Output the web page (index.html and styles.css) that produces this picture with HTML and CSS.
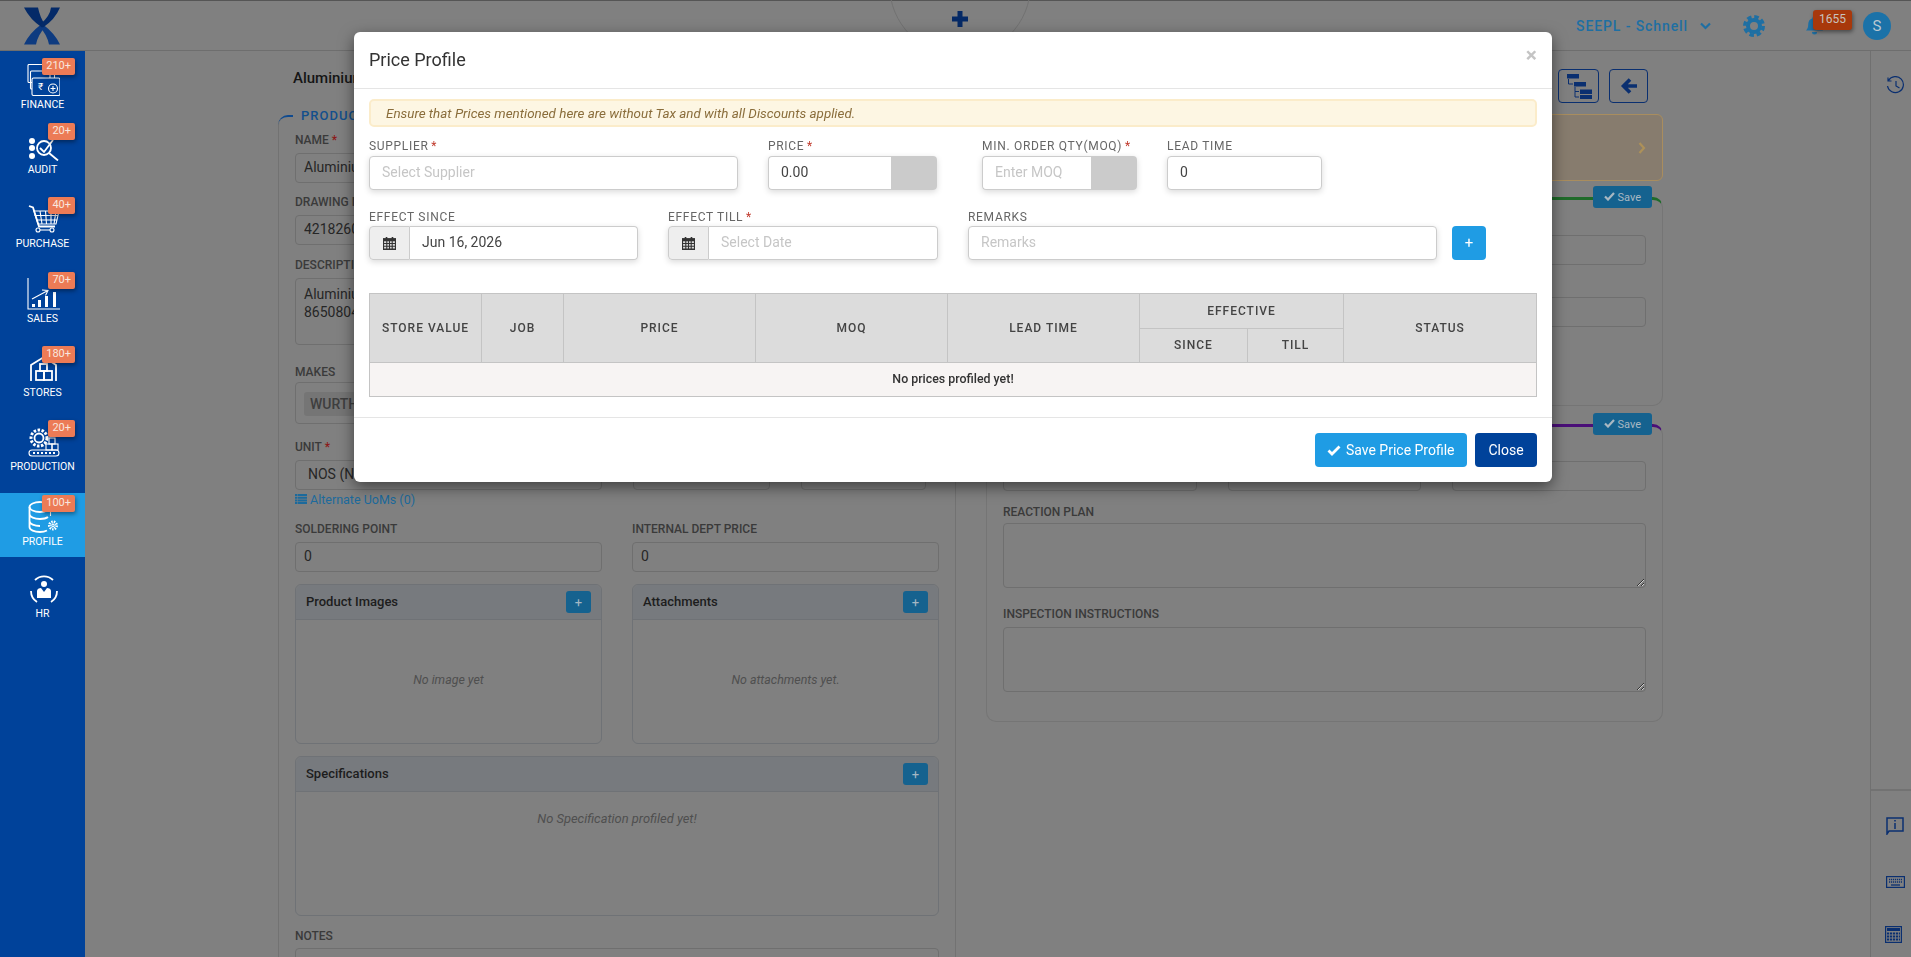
FILE: index.html
```html
<!DOCTYPE html>
<html lang="en">
  <head>
    <meta charset="UTF-8" />
    <title>Price Profile</title>
    <link rel="stylesheet" href="styles.css">
  </head>
  <body>
    <div class="app">
      <header class="topbar">
        <svg class="logo" width="36" height="38" viewBox="0 0 36 37">
          <path fill="#0e3b80" d="M0 37H12Q14 27 21 20L17 17Q5 26 0 37Z" />
          <path fill="#0e3b80" d="M36 37H25Q23 27 16 20L19 17Q31 26 36 37Z" />
          <path fill="#042a68" d="M0 0H14Q16 10 21 17L18 20Q6 12 0 0Z" />
          <path fill="#042a68" d="M36 0H27Q26 9 16 17L19 20Q31 12 36 0Z" />
        </svg>
        <div class="quick-add">
          <svg width="16" height="16" viewBox="0 0 16 16"><path fill="#062a66" d="M5.5 0h5v5.5H16v5h-5.500V16h-5v-5.500H0v-5h5.500z" /></svg>
        </div>
        <div class="company">SEEPL - Schnell</div>
        <svg class="company-caret" width="11" height="8" viewBox="0 0 11 8"><path d="M1 1.500l4.500 4.500L10 1.500" fill="none" stroke="#1e6fa3" stroke-width="2.200" /></svg>
        <svg class="gear" width="22" height="22" viewBox="0 0 22 22">
          <circle cx="11" cy="11" r="6" fill="none" stroke="#1e6fa3" stroke-width="4" />
          <circle cx="11" cy="11" r="9.300" fill="none" stroke="#1e6fa3" stroke-width="3.400" stroke-dasharray="4.500 2.800" />
        </svg>
        <div class="bell">
          <svg width="17" height="20" viewBox="0 0 17 20"><path fill="#1e6fa3" d="M8.500 0a2 2 0 012 2.200c3 .8 4.300 3.300 4.300 6.300 0 3 .7 4.500 2.200 6H0c1.500-1.500 2.200-3 2.200-6 0-3 1.300-5.500 4.300-6.300A2 2 0 018.500 0zM6 16h5a2.500 2.500 0 01-5 0z" /></svg>
          <span class="bell-count">1655</span>
        </div>
        <div class="avatar">S</div>
      </header>

      <div class="workspace">
        <nav class="sidebar">
          <a class="nav-item nav-finance">
            <span class="nav-badge">210+</span>
            <svg class="nav-icon" viewBox="0 0 34 32">
              <rect x="2" y="0.500" width="22" height="18" rx="1" />
              <rect x="4.500" y="7" width="24" height="18" rx="1" />
              <rect class="on-blue" x="6" y="14" width="28" height="17.500" rx="1.500" />
              <text x="12" y="26" class="rupee">₹</text>
              <circle class="on-blue" cx="27" cy="24.500" r="4.500" />
              <path d="M24.500 24.500h5M27 22v5" />
            </svg>
            <span class="nav-label">Finance</span>
          </a>
          <a class="nav-item">
            <span class="nav-badge">20+</span>
            <svg class="nav-icon" viewBox="0 0 34 32">
              <circle class="dot" cx="6" cy="12" r="3" />
              <circle class="dot" cx="6" cy="19" r="3" />
              <circle class="dot" cx="6" cy="27" r="3" />
              <circle class="bold" cx="18" cy="19" r="7" />
              <path class="bold" d="M23 24l9 7.500" />
              <path class="bold" d="M14 19l4 4 9-12" />
            </svg>
            <span class="nav-label">Audit</span>
          </a>
          <a class="nav-item nav-wide">
            <span class="nav-badge">40+</span>
            <svg class="nav-icon" viewBox="0 0 34 32">
              <path class="bold" d="M3 3l4 1.500 6 19h16" />
              <path d="M8 8h25l-3 13H12zM8.500 12.500h24M10.500 17h20.500M14 8l2 13M19.500 8l1 13M25 8v13M30 8l-2 13" />
              <circle cx="12" cy="27" r="2" />
              <circle cx="26" cy="27" r="2" />
              <path d="M14 27h10" />
            </svg>
            <span class="nav-label">Purchase</span>
          </a>
          <a class="nav-item">
            <span class="nav-badge">70+</span>
            <svg class="nav-icon" viewBox="0 0 34 32">
              <path d="M2 0v31h32" />
              <path class="bar" d="M6 26h3v3H6zM12 22h3v7h-3zM19 18h3v11h-3zM27 14h3v15h-3z" />
              <path d="M6 21l15-8M16 12l6 .500-2.500 5" />
            </svg>
            <span class="nav-label">Sales</span>
          </a>
          <a class="nav-item">
            <span class="nav-badge">180+</span>
            <svg class="nav-icon" viewBox="0 0 34 32">
              <path class="bold" d="M5 29V13L18 5l12 8v16" />
              <rect class="bold" x="14" y="12" width="7" height="7" />
              <rect class="bold" x="10" y="19" width="8" height="9" />
              <rect class="bold" x="18" y="19" width="8" height="9" />
            </svg>
            <span class="nav-label">Stores</span>
          </a>
          <a class="nav-item nav-wide">
            <span class="nav-badge">20+</span>
            <svg class="nav-icon" viewBox="0 0 34 32">
              <circle cx="13" cy="12" r="8" stroke-dasharray="2.500 1.500" stroke-width="3" />
              <circle cx="13" cy="12" r="4.500" stroke-width="1.800" />
              <rect x="23" y="12" width="6" height="6" />
              <rect x="20" y="18" width="6" height="6" />
              <rect x="26" y="18" width="6" height="6" />
              <rect x="3" y="24" width="30" height="6" rx="3" />
              <path class="dots" d="M7 27h22" />
            </svg>
            <span class="nav-label">Production</span>
          </a>
          <a class="nav-item nav-active">
            <span class="nav-badge">100+</span>
            <svg class="nav-icon" viewBox="0 0 34 32">
              <ellipse class="bold" cx="14" cy="6" rx="10.500" ry="5" />
              <path class="bold" d="M3.500 6v20c0 3 5 5 10.500 5 3 0 5-.5 7-1.500M3.500 13c0 3 5 5 10.500 5 3 0 6-.5 8-2M3.500 20c0 3 5 5 10.500 5" />
              <path d="M24.500 6v9" />
              <circle cx="27" cy="24.500" r="3.500" stroke-width="3" stroke-dasharray="1.400 1" />
              <circle cx="27" cy="24.500" r="1.200" />
            </svg>
            <span class="nav-label">Profile</span>
          </a>
          <a class="nav-item nav-last">
            <svg class="nav-icon" viewBox="0 0 34 32">
              <path class="bold" d="M9 7A13 13 0 0127 7M31 18A13 13 0 0125 29M11 29A13 13 0 015 18" />
              <circle class="dot" cx="18" cy="11" r="3" />
              <path class="dot" d="M11 25v-7c0-2 2-3 4-3l3 4 3-4c2 0 4 1 4 3v7z" />
            </svg>
            <span class="nav-label">HR</span>
          </a>
        </nav>

        <main class="content">
          <div class="title-row">
            <div class="product-title">Aluminium</div>
            <div class="title-actions">
              <button class="outline-btn tree-btn">
                <svg width="26" height="26" viewBox="0 0 26 26">
                  <path fill="#0a2f70" d="M1 1h12v4.500H1zM8 9h12v4.500H8zM14 16.500h12V21H14zM14 22h12v4H14z" />
                  <path fill="none" stroke="#0a2f70" d="M2.500 6v5H7M9 14v4.500h4M9 18.500V24h4" />
                </svg>
              </button>
              <button class="outline-btn back-btn">
                <svg width="18" height="18" viewBox="0 0 18 18"><path fill="none" stroke="#0a2f70" stroke-width="3.600" d="M17 9H4M10 2.500L3.500 9l6.500 6.500" /></svg>
              </button>
            </div>
          </div>

          <div class="columns">
            <section class="product-panel">
              <div class="legend">Product</div>

              <div class="field">
                <label>Name <i>*</i></label>
                <input class="bg-input" value="Aluminium" />
              </div>
              <div class="field">
                <label>Drawing No</label>
                <input class="bg-input" value="42182600" />
              </div>
              <div class="field field-desc">
                <label>Description</label>
                <textarea class="bg-input desc-input">Aluminium
86508040</textarea>
              </div>
              <div class="field field-makes">
                <label>Makes</label>
                <div class="makes-box"><span class="make-tag">WURTH</span></div>
              </div>
              <div class="unit-row">
                <div class="field unit-col">
                  <label>Unit <i>*</i></label>
                  <input class="bg-input unit-input" value="NOS (Numbers)" />
                </div>
                <input class="bg-input col-b" />
                <input class="bg-input col-c" />
              </div>
              <a class="uom-link">
                <svg width="12" height="10" viewBox="0 0 12 10"><path fill="#1c6a9c" d="M0 0h2.500v2H0zM3 0h9v2H3zM0 2.700h2.500v2H0zM3 2.700h9v2H3zM0 5.400h2.500v2H0zM3 5.400h9v2H3zM0 8h2.500v2H0zM3 8h9v2H3z" /></svg>
                Alternate UoMs (0)
              </a>
              <div class="two-col points-row">
                <div class="field">
                  <label>Soldering Point</label>
                  <input class="bg-input" value="0" />
                </div>
                <div class="field">
                  <label>Internal Dept Price</label>
                  <input class="bg-input" value="0" />
                </div>
              </div>
              <div class="two-col">
                <div class="sub-card">
                  <div class="sub-card-head">Product Images <button class="mini-add">+</button></div>
                  <div class="sub-card-empty">No image yet</div>
                </div>
                <div class="sub-card">
                  <div class="sub-card-head">Attachments <button class="mini-add">+</button></div>
                  <div class="sub-card-empty">No attachments yet.</div>
                </div>
              </div>
              <div class="sub-card spec-card">
                <div class="sub-card-head">Specifications <button class="mini-add">+</button></div>
                <div class="spec-empty">No Specification profiled yet!</div>
              </div>
              <div class="field notes-field">
                <label>Notes</label>
                <input class="bg-input" />
              </div>
            </section>

            <aside class="side-col">
              <div class="warn-card">
                <svg width="8" height="12" viewBox="0 0 8 12"><path d="M1.500 1l4.500 5-4.500 5" fill="none" stroke="#ad9159" stroke-width="2.200" /></svg>
              </div>

              <section class="side-panel green-panel">
                <button class="panel-save"><svg width="11" height="9" viewBox="0 0 11 9"><path d="M1 4.500l3 3L10 1" fill="none" stroke="#a9b8c2" stroke-width="2.200" /></svg> Save</button>
                <input class="bg-input" />
                <input class="bg-input green-second" />
              </section>

              <section class="side-panel purple-panel">
                <button class="panel-save"><svg width="11" height="9" viewBox="0 0 11 9"><path d="M1 4.500l3 3L10 1" fill="none" stroke="#a9b8c2" stroke-width="2.200" /></svg> Save</button>
                <div class="three-col">
                  <input class="bg-input" />
                  <input class="bg-input" />
                  <input class="bg-input" />
                </div>
                <div class="field plan-field">
                  <label>Reaction Plan</label>
                  <textarea class="bg-input big-area"></textarea>
                </div>
                <div class="field inspect-field">
                  <label>Inspection Instructions</label>
                  <textarea class="bg-input big-area"></textarea>
                </div>
              </section>
            </aside>
          </div>
        </main>

        <aside class="rail">
          <svg class="rail-history" width="19" height="19" viewBox="0 0 19 19">
            <path fill="none" stroke="#0a2f70" stroke-width="1.200" d="M2.500 4.500A8 8 0 111.500 10M2 1.500v3.500h3.500M10 5v5l3.500 2" />
          </svg>
          <div class="rail-tools">
            <svg width="18" height="18" viewBox="0 0 18 18">
              <path fill="none" stroke="#0a2f70" stroke-width="1.500" d="M1 1h16v13H3l-2 3zM9 6v6" />
              <path fill="#0a2f70" d="M8.200 3h1.600v1.600H8.200z" />
            </svg>
            <svg class="rail-keys" width="19" height="12" viewBox="0 0 19 12">
              <rect x="0.600" y="0.600" width="17.800" height="10.800" fill="none" stroke="#0a2f70" stroke-width="1.200" />
              <path stroke="#0a2f70" stroke-width="1.500" stroke-dasharray="1.200 .8" d="M3 3.500h13M3 6h13" />
              <path stroke="#0a2f70" stroke-width="1.300" d="M5 9h9" />
            </svg>
            <svg class="rail-calc" width="17" height="17" viewBox="0 0 17 17">
              <rect x="0.600" y="0.600" width="15.800" height="15.800" fill="none" stroke="#0a2f70" stroke-width="1.200" />
              <path fill="#0a2f70" d="M2 2h13v3H2z" />
              <path stroke="#0a2f70" stroke-width="1.800" stroke-dasharray="2.200 .8" d="M2 7.500h13M2 10.500h13M2 13.500h13" />
            </svg>
          </div>
        </aside>
      </div>
    </div>

    <div class="modal">
      <div class="modal-head">
        <h4>Price Profile</h4>
        <span class="modal-close">×</span>
      </div>
      <div class="modal-body">
        <div class="tax-alert">Ensure that Prices mentioned here are without Tax and with all Discounts applied.</div>

        <div class="form-row">
          <div class="form-col col-supplier">
            <label>Supplier <i>*</i></label>
            <input class="modal-input" placeholder="Select Supplier" />
          </div>
          <div class="form-col col-price">
            <label>Price <i>*</i></label>
            <div class="addon-group">
              <input class="modal-input" value="0.00" />
              <span class="unit-addon price-addon"></span>
            </div>
          </div>
          <div class="form-col col-moq">
            <label>Min. Order Qty(MOQ) <i>*</i></label>
            <div class="addon-group">
              <input class="modal-input" placeholder="Enter MOQ" />
              <span class="unit-addon"></span>
            </div>
          </div>
          <div class="form-col col-lead">
            <label>Lead Time</label>
            <input class="modal-input" value="0" />
          </div>
        </div>

        <div class="form-row form-row-2">
          <div class="form-col col-since">
            <label>Effect Since</label>
            <div class="addon-group">
              <span class="cal-addon">
                <svg width="13" height="13" viewBox="0 0 12 12">
                  <path fill="#333" d="M0 1h12v11H0z" />
                  <path fill="#333" d="M2.500 0h1.500v2H2.500zM8 0h1.500v2H8z" />
                  <path fill="#ddd" d="M1 4h2v1.500H1zM4 4h1.500v1.500H4zM6.500 4H8v1.500H6.500zM9 4h2v1.500H9zM1 6.500h2V8H1zM4 6.500h1.500V8H4zM6.500 6.500H8V8H6.500zM9 6.500h2V8H9zM1 9h2v1.500H1zM4 9h1.500v1.500H4zM6.500 9H8v1.500H6.500zM9 9h2v1.500H9z" />
                </svg>
              </span>
              <input class="modal-input" value="Jun 16, 2026" />
            </div>
          </div>
          <div class="form-col col-till">
            <label>Effect Till <i>*</i></label>
            <div class="addon-group">
              <span class="cal-addon">
                <svg width="13" height="13" viewBox="0 0 12 12">
                  <path fill="#333" d="M0 1h12v11H0z" />
                  <path fill="#333" d="M2.500 0h1.500v2H2.500zM8 0h1.500v2H8z" />
                  <path fill="#ddd" d="M1 4h2v1.500H1zM4 4h1.500v1.500H4zM6.500 4H8v1.500H6.500zM9 4h2v1.500H9zM1 6.500h2V8H1zM4 6.500h1.500V8H4zM6.500 6.500H8V8H6.500zM9 6.500h2V8H9zM1 9h2v1.500H1zM4 9h1.500v1.500H4zM6.500 9H8v1.500H6.500zM9 9h2v1.500H9z" />
                </svg>
              </span>
              <input class="modal-input" placeholder="Select Date" />
            </div>
          </div>
          <div class="form-col col-remarks">
            <label>Remarks</label>
            <input class="modal-input" placeholder="Remarks" />
          </div>
          <button class="add-btn">+</button>
        </div>

        <table class="price-table">
          <colgroup>
            <col class="w-store" /><col class="w-job" /><col class="w-mid" /><col class="w-mid" /><col class="w-mid" />
            <col class="w-since" /><col class="w-till" /><col class="w-status" />
          </colgroup>
          <thead>
            <tr>
              <th rowspan="2">Store Value</th>
              <th rowspan="2">Job</th>
              <th rowspan="2">Price</th>
              <th rowspan="2">MOQ</th>
              <th rowspan="2">Lead Time</th>
              <th colspan="2">Effective</th>
              <th rowspan="2">Status</th>
            </tr>
            <tr>
              <th>Since</th>
              <th>Till</th>
            </tr>
          </thead>
          <tbody>
            <tr><td colspan="8">No prices profiled yet!</td></tr>
          </tbody>
        </table>
      </div>
      <div class="modal-foot">
        <button class="btn-save">
          <svg width="14" height="11" viewBox="0 0 14 11"><path d="M1.500 5.500l3.500 3.500 7.500-7.500" fill="none" stroke="#fff" stroke-width="2.800" /></svg>
          Save Price Profile
        </button>
        <button class="btn-close">Close</button>
      </div>
    </div>
  </body>
</html>
```

FILE: styles.css
```css
* {
  box-sizing: border-box;
}

html,
body {
  height: 100%;
}

body {
  margin: 0;
  font-family: Roboto, "Liberation Sans", sans-serif;
  font-size: 14px;
  background: #808080;
  color: #2a2a2a;
  overflow: hidden;
}

button {
  font-family: inherit;
  cursor: pointer;
}

.app {
  height: 957px;
  display: flex;
  flex-direction: column;
}

/* top bar */
.topbar {
  height: 51px;
  flex-shrink: 0;
  display: flex;
  align-items: center;
  position: relative;
  border-top: 1px solid #555;
  border-bottom: 1px solid #6e6e6e;
  padding-left: 24px;
}

.logo {
  margin-top: 1px;
  margin-right: auto;
}

.quick-add {
  position: absolute;
  left: 889px;
  top: -87px;
  width: 142px;
  height: 142px;
  border-radius: 50%;
  border: 1px solid #727272;
  display: flex;
  align-items: flex-end;
  justify-content: center;
  padding-bottom: 28px;
}

.company {
  color: #1e6fa3;
  font-size: 14px;
  font-weight: 500;
  letter-spacing: 0.9px;
}

.company-caret {
  margin-left: 12px;
}

.gear {
  margin-left: 32px;
}

.bell {
  margin-left: 41px;
  width: 17px;
  height: 20px;
  position: relative;
}

.bell svg {
  display: block;
}

.bell-count {
  position: absolute;
  left: 7px;
  top: -6px;
  width: 39px;
  height: 20px;
  line-height: 19px;
  text-align: center;
  font-size: 12px;
  color: #c9c2bd;
  background: #a8380b;
  border-radius: 3px;
  box-shadow: 1px 2px 4px rgba(0, 0, 0, 0.45);
}

.avatar {
  margin-left: 40px;
  margin-right: 20px;
  width: 28px;
  height: 28px;
  border-radius: 50%;
  background: #1b72a8;
  color: #b9c7d1;
  font-size: 15px;
  line-height: 28px;
  text-align: center;
}

.workspace {
  flex: 1;
  display: flex;
  min-height: 0;
}

/* left nav */
.sidebar {
  width: 85px;
  flex-shrink: 0;
  background: #00429a;
  padding-top: 5px;
}

.nav-item {
  display: flex;
  flex-direction: column;
  align-items: center;
  position: relative;
  height: 64px;
  margin-bottom: 10px;
  padding-top: 8px;
  color: #fff;
}

.nav-finance {
  margin-bottom: 1px;
}

.nav-wide {
  margin-bottom: 11px;
}

.nav-active {
  background: #1f9ce4;
  margin-bottom: 8px;
}

.nav-icon {
  width: 34px;
  height: 32px;
  fill: none;
  stroke: #fff;
  stroke-width: 1.100;
}

.nav-icon .bold {
  stroke-width: 1.800;
}

.nav-icon .dot,
.nav-icon .bar {
  fill: #fff;
  stroke: none;
}

.nav-icon .on-blue {
  fill: #00429a;
}

.nav-icon .rupee {
  fill: #fff;
  stroke: none;
  font-size: 10px;
}

.nav-icon .dots {
  stroke-width: 2;
  stroke-dasharray: 2 2;
}

.nav-label {
  margin-top: 2px;
  line-height: 14px;
  font-size: 10.500px;
  text-transform: uppercase;
}

.nav-badge {
  position: absolute;
  top: 2px;
  right: 10px;
  height: 17px;
  line-height: 16px;
  padding: 0 4px;
  font-size: 11px;
  color: #f8e7df;
  background: #ec7b56;
  border-radius: 2px;
  box-shadow: 1px 2px 4px rgba(0, 0, 0, 0.4);
  z-index: 1;
}

/* page behind the dialog */
.content {
  flex: 1;
  min-width: 0;
  overflow: hidden;
  padding: 18px 207px 0 193px;
}

.title-row {
  height: 34px;
  display: flex;
  align-items: center;
  justify-content: space-between;
  padding: 0 15px;
}

.product-title {
  margin-top: -16px;
  font-size: 15px;
  font-weight: 500;
  color: #151515;
}

.title-actions {
  display: flex;
  gap: 10px;
}

.outline-btn {
  height: 34px;
  background: transparent;
  border: 1px solid #0a2f70;
  border-radius: 4px;
  padding: 0;
  display: flex;
  align-items: center;
  justify-content: center;
}

.tree-btn {
  width: 41px;
}

.back-btn {
  width: 39px;
}

.columns {
  display: flex;
  gap: 30px;
  margin-top: 12px;
}

.product-panel {
  width: 678px;
  height: 900px;
  flex-shrink: 0;
  position: relative;
  border: 1px solid #727272;
  border-top-color: transparent;
  border-radius: 10px 10px 0 0;
  padding: 17px 16px 0;
}

.product-panel::before {
  content: "";
  position: absolute;
  left: -1px;
  top: -1px;
  width: 15px;
  height: 8px;
  border-top: 2px solid #0f4a8f;
  border-top-left-radius: 10px;
}

.legend {
  position: absolute;
  left: 22px;
  top: -8px;
  font-size: 13px;
  font-weight: 500;
  letter-spacing: 1px;
  color: #134f8c;
  text-transform: uppercase;
}

.field label {
  display: block;
  height: 14px;
  line-height: 14px;
  margin-bottom: 6px;
  font-size: 12px;
  font-weight: 500;
  color: #3a3a3a;
  text-transform: uppercase;
}

.field {
  margin-bottom: 12px;
}

.field label i {
  color: #8c1a1a;
  font-style: normal;
}

.bg-input {
  display: block;
  width: 100%;
  height: 30px;
  padding: 0 8px 2px;
  background: transparent;
  border: 1px solid #6f6f6f;
  border-radius: 4px;
  font-family: inherit;
  font-size: 14px;
  color: #262626;
}

.field-desc {
  margin-top: 13px;
}

.desc-input {
  height: 67px;
  padding-top: 6px;
  line-height: 18px;
  resize: none;
}

.field-makes {
  margin-top: 20px;
  margin-bottom: 16px;
}

.field-makes label {
  margin-bottom: 3px;
}

.makes-box {
  height: 42px;
  border: 1px solid #6f6f6f;
  border-radius: 4px;
  padding: 9px 8px;
}

.make-tag {
  display: inline-block;
  height: 24px;
  line-height: 24px;
  width: 200px;
  padding: 0 6px;
  background: #757575;
  border-radius: 3px;
  color: #3e3e3e;
  font-weight: 500;
}

.unit-row {
  display: flex;
  gap: 31px;
  align-items: flex-end;
}

.unit-col {
  width: 307px;
  flex-shrink: 0;
  margin-bottom: 0;
}

.unit-input {
  padding-left: 12px;
}

.col-b {
  width: 137px;
}

.col-c {
  width: 125px;
}

.uom-link {
  display: flex;
  align-items: center;
  gap: 3px;
  height: 16px;
  margin-top: 1px;
  font-size: 12.500px;
  color: #1c6a9c;
}

.two-col {
  display: grid;
  grid-template-columns: 307px 307px;
  gap: 30px;
}

.points-row {
  margin-top: 15px;
}

.points-row .field {
  margin-bottom: 12px;
}

.sub-card {
  height: 160px;
  border: 1px solid #6f7276;
  border-radius: 6px;
}

.sub-card-head {
  height: 35px;
  display: flex;
  align-items: center;
  justify-content: space-between;
  padding: 0 10px 2px;
  background: #777a7e;
  border-bottom: 1px solid #6f7276;
  border-radius: 6px 6px 0 0;
  font-size: 13px;
  font-weight: 500;
  color: #1d1d1d;
}

.mini-add {
  width: 25px;
  height: 22px;
  margin-top: 2px;
  padding: 0;
  border: 0;
  border-radius: 3px;
  background: #15628f;
  color: #a5b7c3;
  font-size: 13px;
}

.sub-card-empty {
  height: 118px;
  display: flex;
  align-items: center;
  justify-content: center;
  font-size: 12.400px;
  font-style: italic;
  color: #4f4f4f;
}

.spec-card {
  margin-top: 12px;
}

.spec-empty {
  padding-top: 19px;
  text-align: center;
  font-size: 12.900px;
  font-style: italic;
  color: #4f4f4f;
}

.notes-field {
  margin-top: 13px;
}

.notes-field label {
  margin-bottom: 5px;
}

.side-col {
  width: 677px;
  flex-shrink: 0;
  margin-top: -1px;
}

.warn-card {
  height: 67px;
  background: #877c6e;
  border: 1px solid #a98d5e;
  border-radius: 6px;
  display: flex;
  align-items: center;
  justify-content: flex-end;
  padding-right: 16px;
}

.side-panel {
  position: relative;
  border: 1px solid #757575;
  border-radius: 10px;
  padding: 0 16px;
}

.green-panel {
  height: 209px;
  margin-top: 16px;
  border-top: 3px solid #1f6b2a;
  padding-top: 35px;
}

.green-second {
  margin-top: 32px;
}

.purple-panel {
  height: 298px;
  margin-top: 18px;
  border-top: 3px solid #4a0f78;
  padding-top: 34px;
}

.panel-save {
  position: absolute;
  right: 10px;
  top: -14px;
  width: 59px;
  height: 22px;
  padding: 0;
  border: 0;
  border-radius: 3px;
  background: #15628f;
  color: #a9b8c2;
  font-size: 11px;
}

.three-col {
  display: grid;
  grid-template-columns: 194px 193px 194px;
  gap: 31px;
}

.plan-field {
  margin-top: 14px;
  margin-bottom: 19px;
}

.plan-field label {
  margin-bottom: 4px;
}

.inspect-field {
  margin-bottom: 0;
}

.inspect-field label {
  margin-bottom: 6px;
}

.big-area {
  height: 65px;
}

/* right rail */
.rail {
  width: 41px;
  flex-shrink: 0;
  display: flex;
  flex-direction: column;
  border-left: 1px solid #707070;
}

.rail-history {
  margin: 25px 0 0 15px;
}

.rail-tools {
  margin-top: auto;
  height: 168px;
  border-top: 2px solid #727272;
  padding: 26px 0 0 15px;
  display: flex;
  flex-direction: column;
  align-items: flex-start;
}

.rail-keys {
  margin-top: 41px;
}

.rail-calc {
  margin-top: 38px;
  margin-left: -1px;
}

/* dialog */
.modal {
  position: fixed;
  left: 354px;
  top: 32px;
  width: 1198px;
  height: 450px;
  background: #fff;
  border-radius: 6px;
  box-shadow: 0 5px 15px rgba(0, 0, 0, 0.5);
  z-index: 30;
}

.modal-head {
  height: 57px;
  display: flex;
  align-items: center;
  justify-content: space-between;
  padding: 0 15px 2px;
  border-bottom: 1px solid #e5e5e5;
}

.modal-head h4 {
  margin: 0;
  font-size: 18px;
  font-weight: 400;
  color: #333;
}

.modal-close {
  margin: -8px 0 0 0;
  font-size: 21px;
  font-weight: 700;
  color: #c4c4c4;
}

.modal-body {
  padding: 10px 15px 0;
  height: 329px;
  border-bottom: 1px solid #e5e5e5;
}

.tax-alert {
  height: 28px;
  line-height: 25px;
  padding-left: 15px;
  background: #fdf6e3;
  border: 2px solid #fbecca;
  border-radius: 5px;
  font-size: 13.400px;
  font-style: italic;
  color: #8a6d3b;
}

.form-row {
  display: flex;
  align-items: flex-end;
  margin-top: 12px;
}

.form-row-2 {
  margin-top: 20px;
}

.form-col label {
  display: block;
  height: 14px;
  line-height: 14px;
  margin-bottom: 3px;
  font-size: 12px;
  letter-spacing: 0.700px;
  color: #666;
  text-transform: uppercase;
  white-space: nowrap;
}

.form-row-2 .form-col label {
  margin-bottom: 2px;
}

.form-col label i {
  margin-left: -1px;
  color: #c0392b;
  font-style: normal;
}

.col-supplier {
  width: 369px;
}

.col-price {
  width: 169px;
  margin-left: 30px;
}

.col-moq {
  width: 155px;
  margin-left: 45px;
}

.col-lead {
  width: 155px;
  margin-left: 30px;
}

.col-since {
  width: 269px;
}

.col-till {
  width: 270px;
  margin-left: 30px;
}

.col-remarks {
  width: 469px;
  margin-left: 30px;
}

.modal-input {
  display: block;
  width: 100%;
  min-width: 0;
  height: 34px;
  padding: 0 12px 2px;
  background: #fff;
  border: 1px solid #ccc;
  border-radius: 4px;
  box-shadow: 0 2px 6px rgba(0, 0, 0, 0.15);
  font-family: inherit;
  font-size: 14px;
  color: #444;
}

.modal-input::placeholder {
  color: #c6c6c6;
}

.addon-group {
  display: flex;
  border-radius: 4px;
  box-shadow: 0 2px 6px rgba(0, 0, 0, 0.15);
}

.addon-group .modal-input {
  box-shadow: none;
}

.unit-addon {
  width: 46px;
  flex-shrink: 0;
  background: #cbcbcb;
  border-radius: 0 4px 4px 0;
}

.addon-group .modal-input:first-child {
  border-radius: 4px 0 0 4px;
  border-right: 0;
}

.cal-addon {
  width: 41px;
  flex-shrink: 0;
  display: flex;
  align-items: center;
  justify-content: center;
  background: #eee;
  border: 1px solid #ccc;
  border-radius: 4px 0 0 4px;
}

.cal-addon + .modal-input {
  border-left: 0;
  border-radius: 0 4px 4px 0;
}

.add-btn {
  width: 34px;
  height: 34px;
  margin-left: 15px;
  padding: 0;
  border: 0;
  border-radius: 4px;
  background: #1f9ce4;
  color: #fff;
  font-size: 15px;
}

.price-table {
  width: 1167px;
  margin-top: 33px;
  table-layout: fixed;
  border-collapse: collapse;
  border: 1px solid #c4c4c4;
}

.w-store {
  width: 112px;
}

.w-job {
  width: 82px;
}

.w-mid {
  width: 192px;
}

.w-since {
  width: 108px;
}

.w-till {
  width: 96px;
}

.w-status {
  width: 193px;
}

.price-table th {
  height: 34.500px;
  padding: 0;
  background: #dcdcdc;
  border: 1px solid #c4c4c4;
  font-size: 12px;
  font-weight: 500;
  letter-spacing: 1px;
  color: #444;
  text-transform: uppercase;
}

.price-table td {
  height: 34px;
  padding: 0 0 2px;
  background: #f7f4f3;
  text-align: center;
  font-size: 12.400px;
  font-weight: 500;
  color: #333;
}

.modal-foot {
  display: flex;
  justify-content: flex-end;
  gap: 8px;
  padding: 15px;
}

.btn-save,
.btn-close {
  height: 34px;
  padding: 0;
  border: 0;
  border-radius: 4px;
  color: #fff;
  font-size: 14px;
}

.btn-save {
  width: 152px;
  background: #1f9ce4;
}

.btn-save svg {
  margin-right: 1px;
  vertical-align: -1px;
}

.btn-close {
  width: 62px;
  background: #00429a;
}
```
